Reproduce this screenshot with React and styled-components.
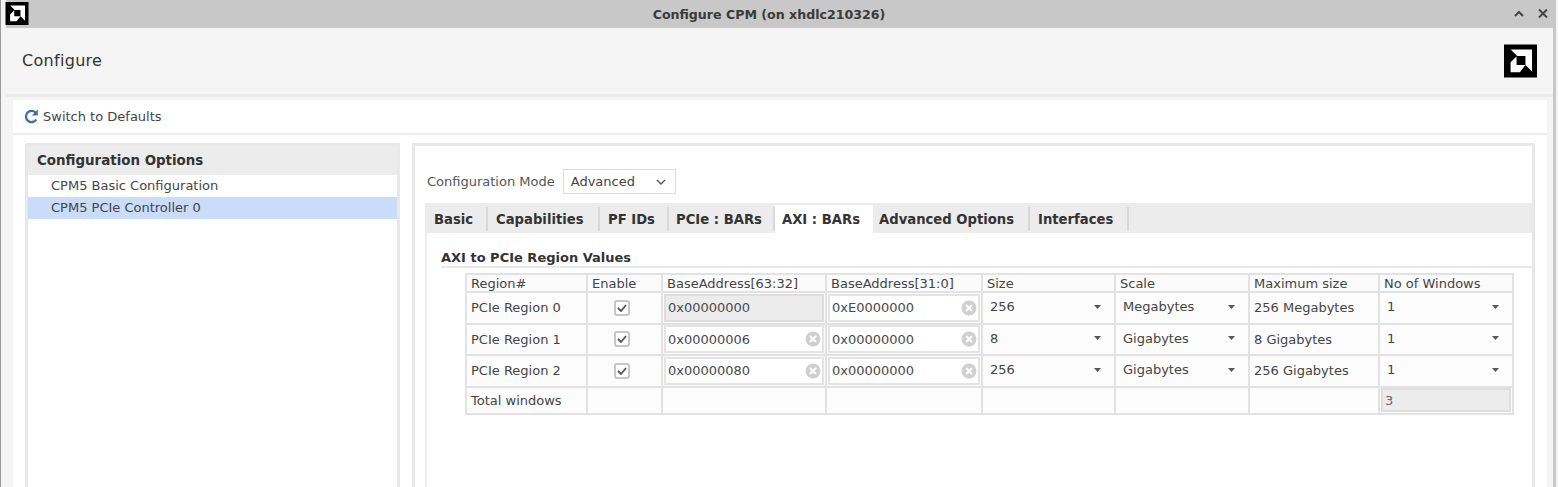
import React from "react";
import styled, { createGlobalStyle } from "styled-components";

const Global = createGlobalStyle`
  html, body { margin: 0; padding: 0; background: #fff; }
  body { font-family: "DejaVu Sans", sans-serif; color: #3c3c3c; }
  * { box-sizing: border-box; }
`;

const Page = styled.div`
  width: 1558px;
  height: 487px;
  overflow: hidden;
  padding: 0 2px 0 5px;
  border-left: 1px solid #9a9a9a;
  background: #f4f4f4;
`;
const Win = styled.div`
  height: 100%;
  display: flex;
  flex-direction: column;
  background: #f5f5f5;
`;
const TitleBar = styled.div`
  height: 28px;
  flex: none;
  position: relative;
  display: flex;
  align-items: center;
  justify-content: center;
  padding-right: 24px;
  background: #c8c8c8;
  font-size: 12.6px;
  font-weight: bold;
  color: #3a3a3a;
`;
const TitleLogo = styled.div`
  position: absolute;
  left: -1px;
  top: 2px;
  display: flex;
`;
const WinButtons = styled.div`
  position: absolute;
  right: 8px;
  top: 9px;
  display: flex;
  gap: 14px;
`;
const Body = styled.div`
  flex: 1;
  min-height: 0;
  display: flex;
  flex-direction: column;
  border-right: 3px solid #c8c8c8;
`;
const Header = styled.div`
  height: 69px;
  flex: none;
  display: flex;
  align-items: center;
  justify-content: space-between;
  padding: 0 16px 1px 16px;
  border-bottom: 3px solid #ebebeb;
  font-size: 16px;
  letter-spacing: 0.3px;
  color: #333;
`;
const Card = styled.div`
  flex: 1;
  min-height: 0;
  display: flex;
  flex-direction: column;
  margin: 3px 6px 0 7px;
  background: #fff;
`;
const Toolbar = styled.div`
  height: 35px;
  flex: none;
  display: flex;
  align-items: center;
  gap: 3px;
  padding: 0 0 0 10px;
  border-bottom: 2px solid #ececec;
  font-size: 13px;
  color: #444;
`;
const Panes = styled.div`
  flex: 1;
  min-height: 0;
  display: flex;
  gap: 12px;
  padding: 8px 12px 0;
`;
const LeftPane = styled.div`
  width: 375px;
  flex: none;
  border: 3px solid #e8e8e8;
  border-bottom: 0;
`;
const PaneTitle = styled.div`
  height: 29px;
  padding-left: 9px;
  display: flex;
  align-items: center;
  background: #ececec;
  font-size: 13.4px;
  font-weight: bold;
  color: #333;
`;
const TreeItem = styled.div`
  height: 22px;
  display: flex;
  align-items: center;
  padding: 0 0 2px 23px;
  font-size: 13px;
  color: #454545;
  background: ${(p) => (p.$selected ? "#c9dcfa" : "#fff")};
`;
const RightPane = styled.div`
  flex: 1;
  min-width: 0;
  display: flex;
  flex-direction: column;
  padding: 0 0 0 10px;
  border: 3px solid #e8e8e8;
  border-bottom: 0;
`;
const ModeRow = styled.div`
  height: 23px;
  flex: none;
  margin: 24px 0 10px;
  display: flex;
  align-items: center;
  gap: 8px;
  padding-left: 2px;
  font-size: 13px;
  color: #555;
`;
const ModeCombo = styled.div`
  width: 113px;
  height: 25px;
  display: flex;
  align-items: center;
  justify-content: space-between;
  padding: 0 9px 0 7px;
  border: 1px solid #dcdcdc;
  color: #444;
`;
const TabBar = styled.div`
  height: 30px;
  flex: none;
  display: flex;
  align-items: stretch;
  padding-top: 2px;
  background: #ececec;
`;
const Tab = styled.div`
  display: flex;
  align-items: center;
  font-size: 13.2px;
  font-weight: bold;
  color: #333;
  background: ${(p) => (p.$active ? "#fff" : "transparent")};
`;
const TabLabel = styled.span`
  display: flex;
  align-items: center;
  height: 24px;
  width: ${(p) => p.$w}px;
  padding-left: ${(p) => p.$pad}px;
  border-right: 2px solid ${(p) => (p.$plain ? "transparent" : "#d9d9d9")};
  white-space: nowrap;
`;
const TabBody = styled.div`
  flex: 1;
  min-height: 0;
  padding: 16px 0 0 14px;
  border-left: 2px solid #ececec;
`;
const Section = styled.div`
  height: 19px;
  display: flex;
  align-items: center;
  border-bottom: 2px solid #e8e8e8;
  font-size: 13px;
  font-weight: bold;
  color: #333;
`;
const Grid = styled.table`
  margin: 5px 0 0 24px;
  width: 1047px;
  table-layout: fixed;
  border-collapse: collapse;
  font-size: 13px;
  color: #444;
`;
const Th = styled.th`
  height: 18px;
  padding: 0 0 0 4px;
  border: 2px solid #e2e2e2;
  background: #fbfbfb;
  font-weight: normal;
  text-align: left;
  color: #444;
  white-space: nowrap;
`;
const Td = styled.td`
  height: ${(p) => p.$h || 31.5}px;
  padding: 0 0 0 ${(p) => (p.$flush ? 0 : 4)}px;
  border: 2px solid #e2e2e2;
  background: #fcfcfc;
  white-space: nowrap;
`;
const CheckWrap = styled.div`
  display: flex;
  justify-content: center;
  padding-right: 5px;
`;
const Check = styled.div`
  width: 16px;
  height: 16px;
  display: flex;
  align-items: center;
  justify-content: center;
  border: 2px solid #c6c6c6;
  border-radius: 3px;
  background: #fff;
`;
const Field = styled.div`
  height: 28px;
  margin: 0 1px;
  display: flex;
  align-items: center;
  justify-content: space-between;
  padding: 0 1px 0 2px;
  border: 2px solid ${(p) => (p.$disabled ? "#dedede" : "#e4e4e4")};
  background: ${(p) => (p.$disabled ? "#ececec" : "#fff")};
  color: #4a4a4a;
`;
const Total = styled.div`
  height: 24px;
  margin: 0 1px;
  display: flex;
  align-items: center;
  padding-left: 2px;
  border: 2px solid #dedede;
  background: #ececec;
  color: #666;
`;
const Select = styled.div`
  display: flex;
  align-items: center;
  justify-content: space-between;
  padding: 0 13px 2px 3px;
  color: #444;
`;

function AmdLogo({ w, h }) {
  return (
    <svg width={w} height={h} viewBox="0 0 100 100">
      <rect width="100" height="100" fill="#000" />
      <path d="M20 15H85V82L65 62V35H40Z M20 84H48L65 62H38V36L20 54Z" fill="#fff" />
    </svg>
  );
}

function ClearIcon() {
  return (
    <svg width="16" height="16" viewBox="0 0 16 16">
      <circle cx="8" cy="8" r="7.5" fill="#cfcfcf" />
      <path d="M5 5L11 11M11 5L5 11" stroke="#fff" strokeWidth="2" />
    </svg>
  );
}

function Caret() {
  return (
    <svg width="7" height="4" viewBox="0 0 7 4">
      <path d="M0 0H7L3.5 4Z" fill="#555" />
    </svg>
  );
}

const rows = [
  { name: "PCIe Region 0", hi: "0x00000000", hiOff: true, lo: "0xE0000000", size: "256", scale: "Megabytes", max: "256 Megabytes" },
  { name: "PCIe Region 1", hi: "0x00000006", lo: "0x00000000", size: "8", scale: "Gigabytes", max: "8 Gigabytes" },
  { name: "PCIe Region 2", hi: "0x00000080", lo: "0x00000000", size: "256", scale: "Gigabytes", max: "256 Gigabytes" },
];

const tabs = [
  { label: "Basic", w: 63, pad: 9 },
  { label: "Capabilities", w: 112, pad: 8 },
  { label: "PF IDs", w: 69, pad: 8 },
  { label: "PCIe : BARs", w: 106, pad: 7 },
  { label: "AXI : BARs", w: 98, pad: 7, active: true, plain: true },
  { label: "Advanced Options", w: 157, pad: 6 },
  { label: "Interfaces", w: 99, pad: 8 },
];

const cols = [121, 75, 164, 156, 133, 134, 130, 134];
const heads = ["Region#", "Enable", "BaseAddress[63:32]", "BaseAddress[31:0]", "Size", "Scale", "Maximum size", "No of Windows"];

export default function App() {
  return (
    <Page>
      <Global />
      <Win>
        <TitleBar>
          <TitleLogo>
            <AmdLogo w={24} h={23} />
          </TitleLogo>
          Configure CPM (on xhdlc210326)
          <WinButtons>
            <svg width="10" height="9" viewBox="0 0 10 9">
              <path d="M1 7L5 3L9 7" fill="none" stroke="#444" strokeWidth="2" />
            </svg>
            <svg width="10" height="9" viewBox="0 0 10 9">
              <path d="M1 0.5L9 8.5M9 0.5L1 8.5" fill="none" stroke="#444" strokeWidth="2" />
            </svg>
          </WinButtons>
        </TitleBar>
        <Body>
          <Header>
            Configure
            <AmdLogo w={33} h={34} />
          </Header>
          <Card>
            <Toolbar>
              <svg width="17" height="17" viewBox="0 0 17 17">
                <path d="M13.3 11.5A5.6 5.6 0 1 1 12.6 4.6" fill="none" stroke="#3f6ea6" strokeWidth="2.3" />
                <path d="M14.8 1.6V7.6H8.8Z" fill="#3f6ea6" />
              </svg>
              Switch to Defaults
            </Toolbar>
            <Panes>
              <LeftPane>
                <PaneTitle>Configuration Options</PaneTitle>
                <TreeItem>CPM5 Basic Configuration</TreeItem>
                <TreeItem $selected>CPM5 PCIe Controller 0</TreeItem>
              </LeftPane>
              <RightPane>
                <ModeRow>
                  Configuration Mode
                  <ModeCombo>
                    Advanced
                    <svg width="10" height="6" viewBox="0 0 10 6">
                      <path d="M1 1L5 5L9 1" fill="none" stroke="#555" strokeWidth="1.4" />
                    </svg>
                  </ModeCombo>
                </ModeRow>
                <TabBar>
                  {tabs.map((t) => (
                    <Tab key={t.label} $active={t.active}>
                      <TabLabel $w={t.w} $pad={t.pad} $plain={t.plain}>
                        {t.label}
                      </TabLabel>
                    </Tab>
                  ))}
                </TabBar>
                <TabBody>
                  <Section>AXI to PCIe Region Values</Section>
                  <Grid>
                    <colgroup>
                      {cols.map((c, i) => (
                        <col key={i} style={{ width: c }} />
                      ))}
                    </colgroup>
                    <thead>
                      <tr>
                        {heads.map((h) => (
                          <Th key={h}>{h}</Th>
                        ))}
                      </tr>
                    </thead>
                    <tbody>
                      {rows.map((r) => (
                        <tr key={r.name}>
                          <Td>{r.name}</Td>
                          <Td $flush>
                            <CheckWrap>
                              <Check>
                                <svg width="10" height="8" viewBox="0 0 10 8">
                                  <path d="M1 4L4 7L9 1" fill="none" stroke="#555" strokeWidth="1.8" />
                                </svg>
                              </Check>
                            </CheckWrap>
                          </Td>
                          <Td $flush>
                            <Field $disabled={r.hiOff}>
                              {r.hi}
                              {!r.hiOff && <ClearIcon />}
                            </Field>
                          </Td>
                          <Td $flush>
                            <Field>
                              {r.lo}
                              <ClearIcon />
                            </Field>
                          </Td>
                          <Td>
                            <Select>
                              {r.size}
                              <Caret />
                            </Select>
                          </Td>
                          <Td>
                            <Select>
                              {r.scale}
                              <Caret />
                            </Select>
                          </Td>
                          <Td>{r.max}</Td>
                          <Td>
                            <Select>
                              1
                              <Caret />
                            </Select>
                          </Td>
                        </tr>
                      ))}
                      <tr>
                        <Td $h={27}>Total windows</Td>
                        <Td $h={27} />
                        <Td $h={27} />
                        <Td $h={27} />
                        <Td $h={27} />
                        <Td $h={27} />
                        <Td $h={27} />
                        <Td $h={27} $flush>
                          <Total>3</Total>
                        </Td>
                      </tr>
                    </tbody>
                  </Grid>
                </TabBody>
              </RightPane>
            </Panes>
          </Card>
        </Body>
      </Win>
    </Page>
  );
}
